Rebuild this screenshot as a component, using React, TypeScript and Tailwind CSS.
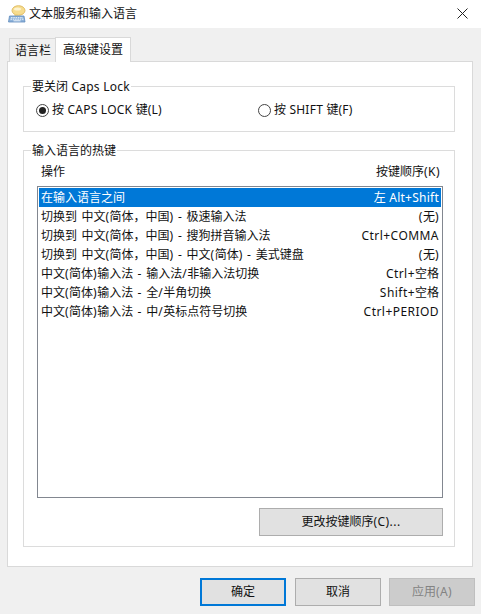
const rows: [string, string][] = [
  ["在输入语言之间", "左 Alt+Shift"],
  ["切换到 中文(简体，中国) - 极速输入法", "(无)"],
  ["切换到 中文(简体，中国) - 搜狗拼音输入法", "Ctrl+COMMA"],
  ["切换到 中文(简体，中国) - 中文(简体) - 美式键盘", "(无)"],
  ["中文(简体)输入法 - 输入法/非输入法切换", "Ctrl+空格"],
  ["中文(简体)输入法 - 全/半角切换", "Shift+空格"],
  ["中文(简体)输入法 - 中/英标点符号切换", "Ctrl+PERIOD"],
];

function T({ s, tight }: { s: string; tight?: boolean }) {
  const parts = s.split(/([\x20-\x7e]+)/).filter(Boolean);
  return (
    <span className="whitespace-pre">
      {parts.map((p, i) =>
        /^[\x20-\x7e]/.test(p) ? (
          <span key={i} className={tight ? "tracking-[0.25px]" : "tracking-[0.45px] [word-spacing:0.8px]"}>
            {p}
          </span>
        ) : (
          <span key={i}>{p}</span>
        ),
      )}
    </span>
  );
}

function Radio({ checked }: { checked?: boolean }) {
  return (
    <span className="flex h-[13px] w-[13px] shrink-0 items-center justify-center rounded-full border border-[#444]">
      {checked && <span className="h-[7px] w-[7px] rounded-full bg-[#222]" />}
    </span>
  );
}

function Logo() {
  return (
    <svg width="18" height="18" viewBox="0 0 18 18" className="shrink-0">
      <ellipse cx="10.5" cy="5.5" rx="6.5" ry="4.8" fill="#f6dc8e" stroke="#e2bf68" />
      <ellipse cx="9.5" cy="4" rx="3.5" ry="1.6" fill="#fdf3cf" />
      <path d="M7 9 L6 12 L10 10 Z" fill="#f0cf78" />
      <path d="M1.5 11 H16 L17 17 H.5 Z" fill="#8db2da" stroke="#5f8cbc" strokeWidth="0.8" />
      <path d="M3 12.7h12M2.5 14.2h13" stroke="#eef4fa" strokeDasharray="1.5 0.8" />
      <path d="M5.5 15.8h7" stroke="#eef4fa" />
    </svg>
  );
}

export default function App() {
  return (
    <div className="flex h-[614px] w-[481px] flex-col overflow-hidden bg-[#f0f0f0] text-[12px] text-[#111] [font-family:'Noto_Sans','Noto_Sans_CJK_SC',sans-serif]">
      <div className="flex h-[28px] shrink-0 items-center bg-white pb-[1px] pl-[8px] pr-[13px]">
        <Logo />
        <span className="ml-[3px] flex-1 leading-none">文本服务和输入语言</span>
        <svg width="11" height="11" viewBox="0 0 11 11">
          <path d="M.5.5l10 10M10.5.5l-10 10" stroke="#222" fill="none" />
        </svg>
      </div>

      <div className="flex h-[33px] shrink-0 items-end pl-[9px]">
        <div className="z-0 mb-[-1px] flex h-[24px] w-[47px] items-center justify-center border border-b-0 border-[#d9d9d9] bg-[#f0f0f0] pl-[1px] pt-[1px]">
          语言栏
        </div>
        <div className="z-10 mb-[-1px] ml-[-1px] flex h-[25px] w-[76px] items-center justify-center border border-b-0 border-[#d9d9d9] bg-white">
          高级键设置
        </div>
      </div>

      <div className="mx-[7px] box-border flex h-[506px] w-[466px] shrink-0 flex-col border border-[#d9d9d9] bg-white pl-[15px] pr-[17px] pt-[24px]">
        <fieldset className="box-border h-[46px] shrink-0 border border-[#dcdcdc]">
          <div className="relative">
            <span className="absolute left-[7px] top-[-9px] bg-white px-[1px] leading-[18px]">
              <T s="要关闭 Caps Lock" tight />
            </span>
          </div>
          <div className="flex pl-[12px] pt-[15px]">
            <label className="flex w-[222px] items-center gap-[2px] leading-[16px]">
              <Radio checked />
              <span className="ml-[1px]">
                <T s="按 CAPS LOCK 键(L)" tight />
              </span>
            </label>
            <label className="flex items-center gap-[2px] leading-[16px]">
              <Radio />
              <span className="ml-[1px]">
                <T s="按 SHIFT 键(F)" tight />
              </span>
            </label>
          </div>
        </fieldset>

        <fieldset className="mt-[18px] box-border flex h-[397px] shrink-0 flex-col border border-[#dcdcdc] pl-[13px] pr-[11px]">
          <div className="relative">
            <span className="absolute left-[-6px] top-[-9px] bg-white px-[1px] leading-[18px]">输入语言的热键</span>
          </div>
          <div className="flex justify-between pl-[4px] pr-[3px] pt-[13px] leading-[16px]">
            <span>操作</span>
            <T s="按键顺序(K)" />
          </div>
          <div className="mt-[6px] box-border h-[312px] border border-[#828790] bg-white p-[1px]">
            {rows.map(([a, b], i) => (
              <div
                key={a}
                className={
                  i === 0
                    ? "flex h-[19px] items-center justify-between bg-[#0078d7] pl-[2px] pr-[2px] text-white"
                    : "flex h-[19px] items-center justify-between pl-[2px] pr-[2px]"
                }
              >
                <T s={a} />
                <T s={b} tight={i === 0} />
              </div>
            ))}
          </div>
          <div className="mt-[10px] flex justify-end">
            <button className="box-border h-[28px] w-[184px] border border-[#adadad] bg-[#e1e1e1]">
              <T s="更改按键顺序(C)..." />
            </button>
          </div>
        </fieldset>
      </div>

      <div className="flex flex-1 items-start justify-end gap-[8px] pr-[6px] pt-[11px]">
        <button className="mr-[1px] box-border h-[28px] w-[86px] border-2 border-[#0078d7] bg-[#e1e1e1]">确定</button>
        <button className="box-border h-[28px] w-[86px] border border-[#adadad] bg-[#e1e1e1]">取消</button>
        <button className="box-border h-[28px] w-[86px] border border-[#bfbfbf] bg-[#cccccc] text-[#838383]">
          <T s="应用(A)" />
        </button>
      </div>
    </div>
  );
}
